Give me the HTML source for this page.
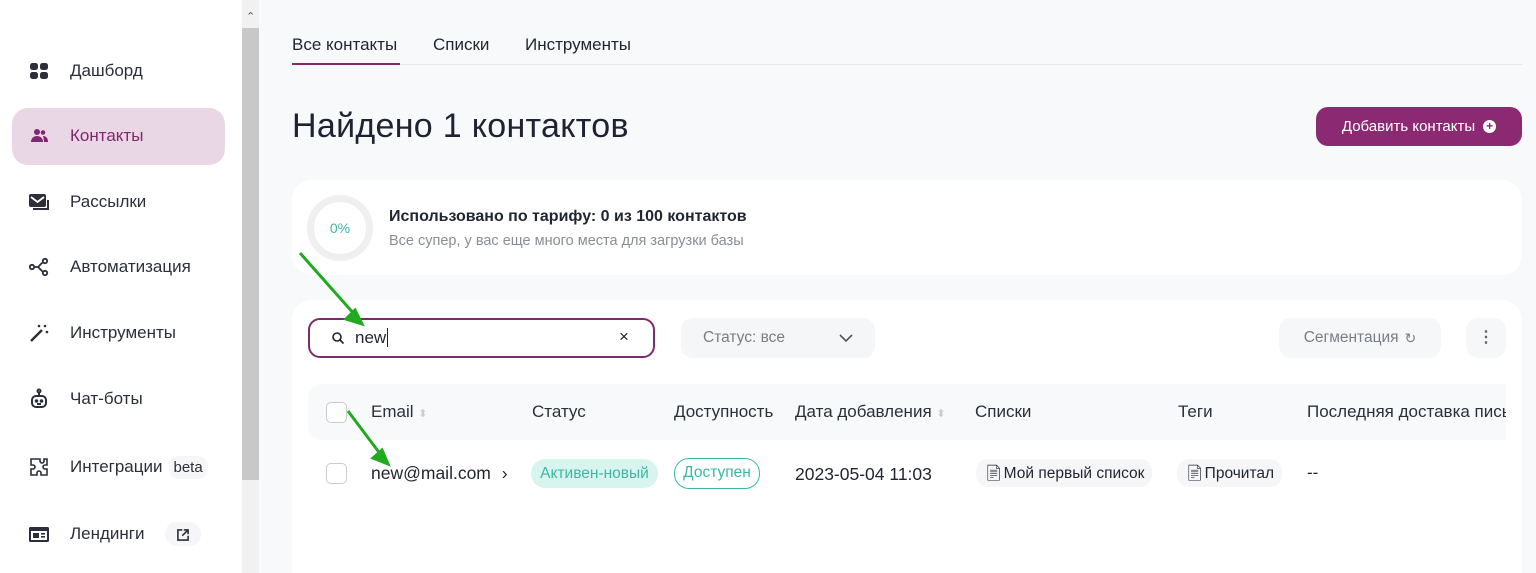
<!DOCTYPE html>
<html><head><meta charset="utf-8"><style>
*{box-sizing:border-box;margin:0;padding:0}
html,body{width:1536px;height:573px;overflow:hidden}
body{background:#f8f9fb;font-family:"Liberation Sans",sans-serif;color:#222633;position:relative}
.abs{position:absolute}
.side{left:0;top:0;width:242px;height:573px;background:#fff}
.sb{left:242px;top:0;width:17px;height:573px;background:#f1f1f1}
.thumb{left:242px;top:28px;width:17px;height:452px;background:#c8c8c8}
.nav{left:28px;font-size:17px;color:#2b2f3a;display:flex;align-items:center;gap:20px;height:24px}
.nav svg{width:22px;height:22px}
.card{background:#fff;border-radius:20px}
.th{font-size:17px;color:#2b2f3a;top:402px}
.chip{background:#f6f6f8;border-radius:12px;height:28px;display:flex;align-items:center;gap:6px;padding:0 8px;font-size:15.5px}
</style></head><body>
<div class="abs side"></div>
<div class="abs sb"></div><div class="abs thumb"></div>
<div class="abs" style="left:246px;top:10px;font-size:11px;color:#555">&#8963;</div>
<div class="abs" style="left:12px;top:108px;width:213px;height:57px;background:#ead7e5;border-radius:16px"></div>

<div class="abs nav" style="top:59px"><svg viewBox="0 0 22 22"><rect x="2" y="3" width="8" height="7" rx="2.5" fill="#2b2f3a"/><rect x="12" y="3" width="8" height="7" rx="2.5" fill="#2b2f3a"/><rect x="2" y="12" width="8" height="7" rx="2.5" fill="#2b2f3a"/><rect x="12" y="12" width="8" height="7" rx="2.5" fill="#2b2f3a"/></svg>Дашборд</div>
<div class="abs nav" style="top:124px;color:#80276d"><svg viewBox="0 0 22 22" fill="#80276d"><circle cx="9" cy="7" r="3"/><path d="M3 17c0-4 3-6 6-6s6 2 6 6z"/><circle cx="15" cy="7.5" r="2.3"/><path d="M15 11c3 0 5 2 5 6h-4c0-2-0.5-4-1-6z"/></svg>Контакты</div>
<div class="abs nav" style="top:190px"><svg viewBox="0 0 22 22"><rect x="1" y="3" width="17" height="13" rx="2" fill="#2b2f3a"/><path d="M3 6l6.5 5L16 6" stroke="#fff" stroke-width="1.8" fill="none"/><path d="M20 9v9H5" stroke="#2b2f3a" stroke-width="2" fill="none"/></svg>Рассылки</div>
<div class="abs nav" style="top:255px"><svg viewBox="0 0 22 22" fill="none" stroke="#2b2f3a" stroke-width="1.8"><circle cx="4" cy="11" r="2.2"/><circle cx="17" cy="5" r="2.2"/><circle cx="17" cy="17" r="2.2"/><path d="M6 11h4l5-5M10 11l5 5"/></svg>Автоматизация</div>
<div class="abs nav" style="top:321px"><svg viewBox="0 0 22 22" fill="#2b2f3a"><path d="M3 19L14 8" stroke="#2b2f3a" stroke-width="2.5"/><circle cx="17" cy="4" r="1.3"/><circle cx="19" cy="10" r="1.3"/><circle cx="11" cy="4" r="1.3"/></svg>Инструменты</div>
<div class="abs nav" style="top:387px"><svg viewBox="0 0 22 22" fill="none" stroke="#2b2f3a" stroke-width="2"><circle cx="11" cy="3" r="1.5"/><path d="M11 5v3"/><rect x="4" y="8" width="14" height="11" rx="4"/><circle cx="8.5" cy="13" r=".8" fill="#2b2f3a"/><circle cx="13.5" cy="13" r=".8" fill="#2b2f3a"/><path d="M9 16h4"/></svg>Чат-боты</div>
<div class="abs nav" style="top:455px"><svg viewBox="0 0 22 22" fill="none" stroke="#2b2f3a" stroke-width="1.6"><path d="M8 3h4v2a2 2 0 004 0V3h3v6h-2a2 2 0 000 4h2v6h-6v-2a2 2 0 00-4 0v2H3v-6h2a2 2 0 000-4H3V3z"/></svg>Интеграции <span style="background:#f6f6f8;border-radius:10px;padding:3px 5px;margin-left:-14px;font-size:15px">beta</span></div>
<div class="abs nav" style="top:522px"><svg viewBox="0 0 22 22"><rect x="1" y="4" width="20" height="15" rx="1.5" fill="#2b2f3a"/><rect x="3" y="8" width="16" height="9" fill="#fff"/><rect x="5" y="10" width="6" height="5" fill="#2b2f3a"/><rect x="13" y="10" width="4" height="1.6" fill="#2b2f3a"/><rect x="13" y="13" width="4" height="1.6" fill="#2b2f3a"/></svg>Лендинги <span style="background:#f6f6f8;border-radius:12px;padding:2px 10px;margin-left:0px"><svg viewBox="0 0 22 22" style="width:16px;height:16px;vertical-align:middle" fill="none" stroke="#2b2f3a" stroke-width="2.2"><path d="M10 4H4v14h14v-6M12 4h6v6M18 4l-8 8"/></svg></span></div>

<!-- tabs -->
<div class="abs" style="left:292px;top:35px;font-size:17px">Все контакты</div>
<div class="abs" style="left:433px;top:35px;font-size:17px">Списки</div>
<div class="abs" style="left:525px;top:35px;font-size:17px">Инструменты</div>
<div class="abs" style="left:292px;top:64px;width:1230px;height:1px;background:#e8e8ec"></div>
<div class="abs" style="left:292px;top:63px;width:108px;height:2px;background:#80276d"></div>

<div class="abs" style="left:292px;top:107px;font-size:34px;color:#1e2233;letter-spacing:0.3px">Найдено 1 контактов</div>
<div class="abs" style="left:1316px;top:107px;width:206px;height:39px;background:#8b2a73;border-radius:12px;color:#fff;font-size:15px;display:flex;align-items:center;justify-content:center;gap:8px">Добавить контакты <span style="width:13px;height:13px;border-radius:50%;background:#fff;color:#8b2a73;font-size:12px;line-height:13px;text-align:center;font-weight:bold">+</span></div>

<div class="abs card" style="left:292px;top:180px;width:1230px;height:95px"></div>
<div class="abs" style="left:307px;top:195px;width:66px;height:66px;border-radius:50%;border:7px solid #efefef"></div>
<div class="abs" style="left:307px;top:220px;width:66px;text-align:center;font-size:14px;color:#3bb8a4">0%</div>
<div class="abs" style="left:389px;top:208px;font-size:16px;font-weight:bold">Использовано по тарифу: 0 из 100 контактов</div>
<div class="abs" style="left:389px;top:233px;font-size:14.5px;color:#8a8d96">Все супер, у вас еще много места для загрузки базы</div>

<div class="abs card" style="left:292px;top:300px;width:1230px;height:290px"></div>
<div class="abs" style="left:308px;top:318px;width:347px;height:40px;border:2px solid #7d2c6b;border-radius:12px"></div>
<svg class="abs" style="left:331px;top:331px" width="14" height="14" viewBox="0 0 14 14" fill="none" stroke="#222" stroke-width="1.6"><circle cx="6" cy="6" r="4"/><path d="M9 9l3.5 3.5"/></svg>
<div class="abs" style="left:355px;top:328px;font-size:17px">new<span style="border-left:1px solid #222;margin-left:1px"></span></div>
<div class="abs" style="left:619px;top:327px;font-size:17px">×</div>
<div class="abs" style="left:681px;top:318px;width:194px;height:40px;background:#f5f6f8;border-radius:12px"></div>
<div class="abs" style="left:703px;top:329px;font-size:15.5px;color:#7a7d86">Статус: все</div>
<svg class="abs" style="left:838px;top:332px" width="16" height="12" viewBox="0 0 16 12" fill="none" stroke="#555" stroke-width="1.6"><path d="M2 3l6 6 6-6"/></svg>
<div class="abs" style="left:1279px;top:318px;width:162px;height:40px;background:#f6f7f9;border-radius:12px;font-size:15.5px;color:#7a7d86;display:flex;align-items:center;justify-content:center;gap:6px">Сегментация <span style="font-size:14px">↻</span></div>
<div class="abs" style="left:1466px;top:318px;width:40px;height:40px;background:#f6f7f9;border-radius:12px;text-align:center;line-height:40px;color:#666;font-weight:bold">⋮</div>

<div class="abs" style="left:308px;top:384px;width:1198px;height:56px;background:#f8f9fb;border-radius:14px 0 0 14px"></div>
<div class="abs" style="left:326px;top:402px;width:21px;height:21px;border:1.5px solid #c9cbd1;border-radius:5px;background:#fff"></div>
<div class="abs th" style="left:371px">Email <span style="color:#ccc;font-size:11px">⬍</span></div>
<div class="abs th" style="left:532px">Статус</div>
<div class="abs th" style="left:674px">Доступность</div>
<div class="abs th" style="left:795px">Дата добавления <span style="color:#ccc;font-size:11px">⬍</span></div>
<div class="abs th" style="left:975px">Списки</div>
<div class="abs th" style="left:1178px">Теги</div>
<div class="abs th" style="left:1307px;width:199px;white-space:nowrap;overflow:hidden">Последняя доставка письма</div>

<div class="abs" style="left:326px;top:463px;width:21px;height:21px;border:1.5px solid #c9cbd1;border-radius:5px"></div>
<div class="abs" style="left:371px;top:463px;font-size:17.5px">new@mail.com <span style="margin-left:6px">›</span></div>
<div class="abs" style="left:531px;top:459px;width:127px;height:29px;background:#d7f4ee;border-radius:14px;color:#3bb8a4;font-size:15.5px;text-align:center;line-height:29px">Активен-новый</div>
<div class="abs" style="left:674px;top:458px;width:86px;height:31px;border:1.5px solid #3bb8a4;border-radius:15px;color:#3bb8a4;font-size:15.5px;text-align:center;line-height:28px">Доступен</div>
<div class="abs" style="left:795px;top:464px;font-size:17.5px">2023-05-04 11:03</div>
<div class="abs chip" style="left:976px;top:459px">📄︎Мой первый список</div>
<div class="abs chip" style="left:1177px;top:459px">📄︎Прочитал</div>
<div class="abs" style="left:1307px;top:463px;font-size:17px">--</div>

<svg class="abs" style="left:0;top:0" width="1536" height="573">
<g stroke="#1faa1f" stroke-width="3" fill="#1faa1f">
<line x1="300" y1="253" x2="355" y2="315"/><path d="M362 324l-16-5 9-9z"/>
<line x1="348" y1="411" x2="381" y2="455"/><path d="M388 464l-15-6 9-8z"/>
</g></svg>
</body></html>
